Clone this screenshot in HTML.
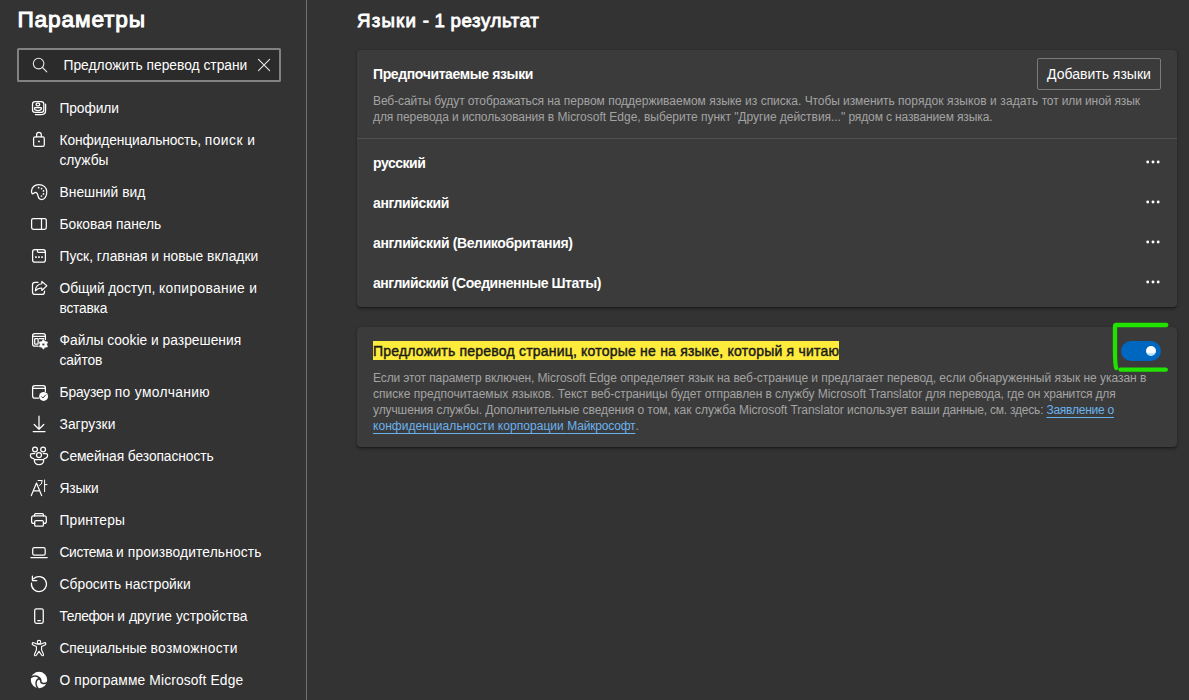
<!DOCTYPE html>
<html lang="ru">
<head>
<meta charset="utf-8">
<title>Параметры</title>
<style>
*{box-sizing:border-box;margin:0;padding:0}
html,body{width:1189px;height:700px;overflow:hidden;background:#333333}
body{font-family:"Liberation Sans",sans-serif;color:#fff;position:relative;font-size:14px}
.abs{position:absolute;white-space:nowrap}
#title{left:17.4px;top:5.4px;font-size:22.7px;letter-spacing:0.85px;font-weight:normal;-webkit-text-stroke:1px #fff;line-height:28px}
#search{left:17px;top:48px;width:264px;height:34px;border:2px solid #828282;border-radius:1.5px;background:#2b2b2b}
#search .txt{left:44.5px;top:6px;font-size:13.8px;line-height:20px;color:#fff}
#vline{left:306px;top:0;width:1px;height:700px;background:#717171}
.nav{position:absolute;left:0;top:99px;width:306px;list-style:none}
.nav li{position:relative;white-space:nowrap;padding:0 40px 12px 59.5px;line-height:20px;font-size:13.8px;color:#fff;width:300px}
.nav li svg{position:absolute;left:29px;top:0;width:20px;height:20px}
h1{left:0;top:9px;font-size:18.7px;font-weight:normal;-webkit-text-stroke:0.85px #fff;line-height:24px}
h1 span{position:absolute;top:0}
.card{position:absolute;left:357px;width:820px;background:#3b3b3b;border-radius:4px;box-shadow:0 1.6px 3.6px rgba(0,0,0,.3),0 0.3px 0.9px rgba(0,0,0,.25)}
#c1{top:50px;height:257px}
#c2{top:327px;height:120px}
.b{font-weight:bold;font-size:14px;letter-spacing:-0.36px;line-height:20px}
.desc{font-size:12px;line-height:16px;color:#a3a3a3;white-space:nowrap;position:absolute;left:16px}
#btn{left:680px;top:8px;width:124px;height:32px;border:1px solid #7a7a7a;border-radius:2px;text-align:center;line-height:30px;font-size:14px}
.hr{position:absolute;left:0;top:88px;width:820px;height:1px;background:#4f4f4f}
.row{position:absolute;left:16px}
.dots{position:absolute;left:789px;width:14px;height:4px}
.dots i{position:absolute;top:0;width:2.6px;height:2.6px;border-radius:50%;background:#fff}
mark{background:#ffeb3b;color:#1b1b1b;padding:0;display:block}
a{color:#6ab2ef;text-decoration:underline;text-underline-offset:3px;text-decoration-thickness:1px}
#toggle{left:764px;top:14px;width:40px;height:20px;border-radius:10px;background:#0067c0}
#toggle i{position:absolute;left:25px;top:5px;width:10px;height:10px;border-radius:50%;background:linear-gradient(#fff 0,#fff 62%,#a8dcf7 80%,#d8f0fc 100%)}
</style>
</head>
<body>
<div id="title" class="abs">Параметры</div>
<div id="search" class="abs">
  <svg class="abs" style="left:12px;top:7px" width="18" height="18" viewBox="0 0 18 18" fill="none" stroke="#e6e6e6" stroke-width="1.1" stroke-linecap="round"><circle cx="7.6" cy="6.6" r="5.3"/><path d="M11.5 10.5L15.8 14.8"/></svg>
  <div class="txt abs">Предложить перевод страни</div>
  <svg class="abs" style="left:238px;top:8px" width="14" height="14" viewBox="0 0 14 14" fill="none" stroke="#e6e6e6" stroke-width="1.1" stroke-linecap="round"><path d="M1.5 1.4L12.6 12.6M12.6 1.4L1.5 12.6"/></svg>
</div>
<div id="vline" class="abs"></div>
<svg class="abs" id="icons" style="left:0;top:0" width="306" height="700" viewBox="0 0 306 700" fill="none" stroke="#fff" stroke-width="1.25" stroke-linecap="round" stroke-linejoin="round">
<!-- profiles -->
<rect x="32.5" y="101.5" width="11.3" height="10.9" rx="2.6"/>
<path d="M45.6 104.2V110.6Q45.6 114.6 41.6 114.6H35.4"/>
<rect x="36.1" y="103.2" width="3.6" height="2.6" rx="1.3"/>
<path d="M35.2 107.5H40.7Q41.5 107.5 41.5 108.3Q41.5 110.5 38 110.5Q34.4 110.5 34.4 108.3Q34.4 107.5 35.2 107.5Z"/>
<!-- lock -->
<rect x="33.6" y="136.8" width="10.7" height="9.6" rx="1.6"/>
<path d="M36.6 136.8V134.7A2.35 2.35 0 0 1 41.3 134.7V136.8"/>
<circle cx="38.95" cy="141.4" r="0.95" fill="#fff" stroke="none"/>
<!-- palette -->
<path d="M38.8 184.5C43.5 184.5 46.8 187.8 46.8 191.8C46.8 196.3 44.5 199.5 41.6 199.5C39.5 199.5 38.6 198.3 38.2 196.7C37.8 195 37.8 193.3 36.3 192.6C35 192 34 193.2 33.1 193.7C32 194.2 31.5 192.5 31.5 191.1C31.5 187.5 34.5 184.5 38.8 184.5Z"/>
<g fill="#fff" stroke="none"><circle cx="38.6" cy="187.7" r=".85"/><circle cx="41.6" cy="188.6" r=".85"/><circle cx="43.5" cy="190.9" r=".85"/><circle cx="43.5" cy="193.9" r=".85"/><circle cx="41.5" cy="196" r=".85"/></g>
<!-- sidebar -->
<rect x="31.6" y="218.6" width="14.7" height="10.7" rx="1.7"/>
<path d="M41.5 218.6V229.3"/>
<!-- start/home/new tabs -->
<rect x="32.6" y="249.7" width="12.8" height="12.5" rx="2.2"/>
<path d="M37.4 249.7V251.2Q37.4 252.4 38.6 252.4H45.4"/>
<g fill="#fff" stroke="none"><rect x="35.1" y="256.2" width="1.7" height="1.7" rx=".3"/><rect x="38.15" y="256.2" width="1.7" height="1.7" rx=".3"/><rect x="41.2" y="256.2" width="1.7" height="1.7" rx=".3"/></g>
<!-- share -->
<path d="M37.9 282.4H35Q32.5 282.4 32.5 284.9V291.9Q32.5 294.4 35 294.4H42Q44.5 294.4 44.5 291.9V291"/>
<path d="M41.8 281.4L46.8 285.8L41.8 290.5V288C39 288 37 288.8 35.4 290.8C35.6 287 38 284.2 41.8 283.8Z" stroke-width="1.15"/>
<!-- cookies -->
<path d="M38 346.2H34.8Q32.6 346.2 32.6 344V335.9Q32.6 333.7 34.8 333.7H43.2Q45.4 333.7 45.4 335.9V339.6"/>
<path d="M32.6 336.4H45.4"/>
<rect x="34.7" y="338.5" width="3.4" height="5.7" rx=".6"/>
<path d="M39.3 338.5H43.7"/>
<path fill="#fff" stroke="#fff" stroke-width=".5" fill-rule="evenodd" d="M43.40 339.50L45.05 341.54L47.64 341.95L46.70 344.40L47.64 346.85L45.05 347.26L43.40 349.30L41.75 347.26L39.16 346.85L40.10 344.40L39.16 341.95L41.75 341.54ZM43.4 343.04999999999995A1.35 1.35 0 1 0 43.4 345.75A1.35 1.35 0 1 0 43.4 343.04999999999995Z"/>
<!-- default browser -->
<path d="M38.5 398.2H34.8Q32.6 398.2 32.6 396V387.9Q32.6 385.7 34.8 385.7H43.2Q45.4 385.7 45.4 387.9V391.5"/>
<path d="M32.6 388.4H45.4"/>
<circle cx="43.6" cy="396.4" r="4.5" fill="#fff" stroke="none"/>
<path d="M41.6 396.7L42.9 398L45.6 395" stroke="#333" stroke-width="1"/>
<!-- downloads -->
<path d="M39 416.2V429M34.2 424.5L39 429.3L43.8 424.5M33.2 431.5H45"/>
<!-- family -->
<circle cx="35" cy="449.5" r="2.4"/><circle cx="43.1" cy="449.5" r="2.4"/><circle cx="39" cy="455.1" r="2.5"/>
<path d="M34.3 459.5H43.8Q43.8 464.7 39 464.7Q34.3 464.7 34.3 459.5Z"/>
<path d="M34.7 453.6H32Q30.4 453.6 30.4 455.2Q30.4 458 33.8 458.6M43.3 453.6H46Q47.6 453.6 47.6 455.2Q47.6 458 44.2 458.6"/>
<!-- languages -->
<path d="M31.3 495.6L36.5 483L41.6 495.6M33.3 490.8H39.7" stroke-width="1.2"/>
<path d="M38.1 480.5H42.2Q42.2 484.6 39.5 485.6M44.6 480V491.7M44.6 484.6H47" stroke-width="1"/>
<!-- printer -->
<path d="M34.6 523.4H33.6Q31.6 523.4 31.6 521.4V517.9Q31.6 515.9 33.6 515.9H44.3Q46.3 515.9 46.3 517.9V521.4Q46.3 523.4 44.3 523.4H43.5"/>
<path d="M34.5 515.9V514.7Q34.5 513.5 35.7 513.5H42.2Q43.4 513.5 43.4 514.7V515.9"/>
<rect x="34.7" y="520.7" width="8.7" height="5.5" rx="1.3"/>
<!-- system -->
<rect x="32.7" y="547.7" width="12.5" height="7.5" rx="1.7"/>
<path d="M30.9 557.5H47.2"/>
<!-- reset -->
<path d="M31.5 583.2A7.5 7.5 0 1 0 33.6 578.8"/>
<path d="M32.4 576.1V580.6H36.8"/>
<!-- phone -->
<rect x="34.7" y="608.8" width="8.55" height="14.5" rx="1.7"/>
<path d="M37.8 620.5H40.3"/>
<!-- accessibility -->
<circle cx="39" cy="642.1" r="1.75" stroke-width="1.1"/>
<path d="M33.7 642.7L36.9 644.1H41.1L44.3 642.7Q45.5 642.4 45.8 643.5Q46 644.6 45 645L41.6 646.5V650L43.5 654.3Q43.9 655.3 43 655.7Q42.1 656 41.6 655.1L39 651.2L36.4 655.1Q35.9 656 35 655.7Q34.1 655.3 34.5 654.3L36.4 650V646.5L33 645Q32 644.6 32.2 643.5Q32.5 642.4 33.7 642.7Z" stroke-width="1.1"/>
<!-- edge -->
<circle cx="39" cy="680" r="8.2" fill="#fff" stroke="none"/>
<path d="M31.2 677.3C33.5 676 36.6 675.9 38.5 677.1C40.4 678.3 41 680 40.8 681.3C40.7 682.5 41.6 683.2 43 683.4C44.5 683.6 46 683.3 47 682.6" stroke="#333" stroke-width="1.5"/>
<path d="M39.2 678.2C37.2 679.4 35.9 681.5 36 683.6C36.1 685.5 36.9 687.2 38 688.3" stroke="#333" stroke-width="1.4"/>
<circle cx="39.6" cy="679.2" r="1" fill="#333" stroke="none"/>
</svg>
<ul class="nav">
  <li><span style="letter-spacing:-0.116px">Профили</span></li>
  <li><span style="letter-spacing:-0.119px">Конфиденциальность, </span><span style="letter-spacing:0.470px">поиск и</span><br><span style="letter-spacing:-0.064px">службы</span></li>
  <li><span style="letter-spacing:0.037px">Внешний вид</span></li>
  <li><span style="letter-spacing:-0.025px">Боковая панель</span></li>
  <li><span style="letter-spacing:0.014px">Пуск, главная и новые вкладки</span></li>
  <li><span style="letter-spacing:-0.062px">Общий доступ, </span><span style="letter-spacing:0.343px">копирование и</span><br><span style="letter-spacing:-0.228px">вставка</span></li>
  <li><span style="letter-spacing:0.013px">Файлы cookie и разрешения</span><br><span style="letter-spacing:-0.111px">сайтов</span></li>
  <li><span style="letter-spacing:-0.156px">Браузер </span><span style="letter-spacing:0.367px">по умолчанию</span></li>
  <li><span style="letter-spacing:0.053px">Загрузки</span></li>
  <li><span style="letter-spacing:-0.083px">Семейная безопасность</span></li>
  <li><span style="letter-spacing:-0.201px">Языки</span></li>
  <li><span style="letter-spacing:0.151px">Принтеры</span></li>
  <li><span style="letter-spacing:-0.363px">Система </span><span style="letter-spacing:0.125px">и производительность</span></li>
  <li><span style="letter-spacing:0.040px">Сбросить настройки</span></li>
  <li><span style="letter-spacing:-0.416px">Телефон </span><span style="letter-spacing:0.045px">и другие устройства</span></li>
  <li><span style="letter-spacing:-0.139px">Специальные </span><span style="letter-spacing:0.343px">возможности</span></li>
  <li><span style="letter-spacing:0.135px">О программе Microsoft Edge</span></li>
</ul>
<h1 class="abs"><span style="left:357px;letter-spacing:1.2px">Языки </span><span style="left:422.7px">- </span><span style="left:434.6px">1 </span><span style="left:450.6px;letter-spacing:.55px">результат</span></h1>
<div class="card" id="c1">
  <div class="b abs" style="left:16px;top:14px;letter-spacing:-0.38px">Предпочитаемые языки</div>
  <div id="btn" class="abs">Добавить языки</div>
  <div class="desc" style="top:43px"><span style="letter-spacing:-0.094px">Веб-сайты будут отображаться </span><span style="letter-spacing:-0.007px">на первом поддерживаемом языке из списка. </span><span style="letter-spacing:-0.074px">Чтобы изменить </span><span style="letter-spacing:0.088px">порядок языков и задать </span><span style="letter-spacing:-0.117px">тот или иной язык</span><br><span style="letter-spacing:-0.077px">для перевода и использования </span><span style="letter-spacing:-0.014px">в Microsoft Edge, выберите </span><span style="letter-spacing:-0.037px">пункт "Другие действия..." </span><span style="letter-spacing:-0.124px">рядом с названием языка.</span></div>
  <div class="hr"></div>
  <div class="b row" style="top:103px;letter-spacing:-0.452px">русский</div><svg class="abs" style="left:786px;top:108.0px" width="20" height="8" viewBox="0 0 20 8" fill="#fff"><circle cx="4.7" cy="4" r="1.45"/><circle cx="10" cy="4" r="1.45"/><circle cx="15.2" cy="4" r="1.45"/></svg>
  <div class="b row" style="top:143px;letter-spacing:-0.383px">английский</div><svg class="abs" style="left:786px;top:148.0px" width="20" height="8" viewBox="0 0 20 8" fill="#fff"><circle cx="4.7" cy="4" r="1.45"/><circle cx="10" cy="4" r="1.45"/><circle cx="15.2" cy="4" r="1.45"/></svg>
  <div class="b row" style="top:183px;letter-spacing:-0.37px">английский (Великобритания)</div><svg class="abs" style="left:786px;top:188.0px" width="20" height="8" viewBox="0 0 20 8" fill="#fff"><circle cx="4.7" cy="4" r="1.45"/><circle cx="10" cy="4" r="1.45"/><circle cx="15.2" cy="4" r="1.45"/></svg>
  <div class="b row" style="top:223px;letter-spacing:-0.445px">английский (Соединенные Штаты)</div><svg class="abs" style="left:786px;top:228.0px" width="20" height="8" viewBox="0 0 20 8" fill="#fff"><circle cx="4.7" cy="4" r="1.45"/><circle cx="10" cy="4" r="1.45"/><circle cx="15.2" cy="4" r="1.45"/></svg>
</div>
<div class="card" id="c2">
  <mark class="b abs" style="left:16px;top:14px;height:19px;line-height:21px;font-weight:normal;-webkit-text-stroke:0.45px #1b1b1b;letter-spacing:0.207px">Предложить перевод страниц, которые не на языке, который я читаю</mark>
  <div id="toggle" class="abs"><i></i></div>
  <div class="desc" style="top:43px"><span style="letter-spacing:-0.116px">Если этот параметр включен, </span><span style="letter-spacing:-0.039px">Microsoft Edge определяет язык </span><span style="letter-spacing:-0.048px">на веб-странице и предлагает </span><span style="letter-spacing:-0.045px">перевод, если обнаруженный </span><span style="letter-spacing:-0.028px">язык не указан в</span><br><span style="letter-spacing:0.034px">списке предпочитаемых языков. </span><span style="letter-spacing:-0.063px">Текст веб-страницы будет отправлен </span><span style="letter-spacing:-0.084px">в службу </span><span style="letter-spacing:-0.048px">Microsoft Translator </span><span style="letter-spacing:-0.135px">для перевода, где он </span><span style="letter-spacing:-0.198px">хранится для</span><br><span style="letter-spacing:-0.096px">улучшения службы. </span><span style="letter-spacing:-0.064px">Дополнительные сведения о том, </span><span style="letter-spacing:0.028px">как служба </span><span style="letter-spacing:-0.029px">Microsoft Translator </span><span style="letter-spacing:-0.13px">использует ваши </span><span style="letter-spacing:-0.213px">данные, см. здесь: </span><a style="letter-spacing:-0.242px">Заявление о</a><br><a><span style="letter-spacing:0.047px">конфиденциальности корпорации </span><span style="letter-spacing:-0.183px">Майкрософт</span></a><span style="letter-spacing:0.756px">.</span></div>
</div>
<svg class="abs" style="left:1105px;top:315px" width="75" height="65" viewBox="1105 315 75 65" fill="none" stroke="#20e400" stroke-width="4.3" stroke-linecap="round" stroke-linejoin="round"><path d="M1166.3 325 L1116.2 325 Q1115 325 1115 326.5 L1115 350 Q1115 366 1116.3 368"/><path d="M1120.5 369.7 L1165.8 369.7"/></svg>
</body>
</html>
